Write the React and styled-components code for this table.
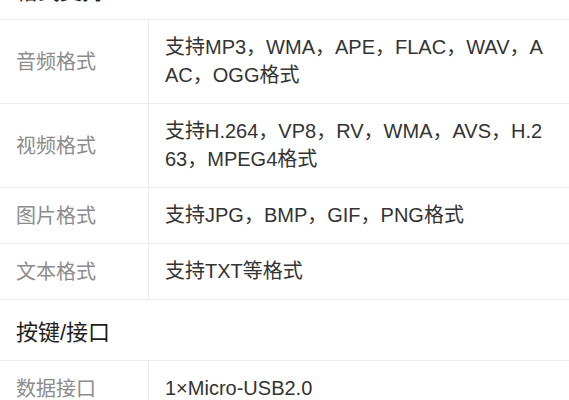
import React from "react";
import styled, { createGlobalStyle } from "styled-components";

const GlobalStyle = createGlobalStyle`
    body {
        margin: 0;
        background: #fff;
        font-family: "Liberation Sans", "Noto Sans CJK SC", sans-serif;
    }
`

const sections = [
    {
        title: "格式支持",
        rows: [
            { label: "音频格式", lines: ["支持MP3，WMA，APE，FLAC，WAV，A", "AC，OGG格式"] },
            { label: "视频格式", lines: ["支持H.264，VP8，RV，WMA，AVS，H.2", "63，MPEG4格式"] },
            { label: "图片格式", lines: ["支持JPG，BMP，GIF，PNG格式"] },
            { label: "文本格式", lines: ["支持TXT等格式"] },
        ],
    },
    {
        title: "按键/接口",
        rows: [
            { label: "数据接口", lines: ["1×Micro-USB2.0"] },
        ],
    },
]

function App() {
    return <Page>
        <GlobalStyle />
        {sections.map(section => (
            <Section key={section.title}>
                <SectionTitle>{section.title}</SectionTitle>
                {section.rows.map(row => (
                    <Row key={row.label}>
                        <Label>{row.label}</Label>
                        <Value>
                            {row.lines.map((line, i) => <Line key={i}>{line}</Line>)}
                        </Value>
                    </Row>
                ))}
            </Section>
        ))}
    </Page>
}

export default App

// page is scrolled: the first section title sits mostly above the window
const Page = styled.div`
    margin-top: -41px;
    width: 569px;
    background: #fff;
`
const Section = styled.section``
const SectionTitle = styled.h2`
    margin: 0;
    padding: 19px 16px 13px;
    font-size: 22px;
    font-weight: 400;
    line-height: 28px;
    color: #1e1e1e;
    border-bottom: 1px solid #ececec;
`
const Row = styled.div`
    display: grid;
    grid-template-columns: 149px 1fr;
    border-bottom: 1px solid #ececec;
`
const Label = styled.div`
    display: flex;
    align-items: center;
    padding: 0 16px;
    font-size: 20px;
    line-height: 28px;
    color: #8c8c8c;
    border-right: 1px solid #ececec;
`
const Value = styled.div`
    padding: 13px 16px 14px;
    font-size: 20px;
    line-height: 28px;
    color: #333;
`
const Line = styled.div`
    white-space: nowrap;
`
